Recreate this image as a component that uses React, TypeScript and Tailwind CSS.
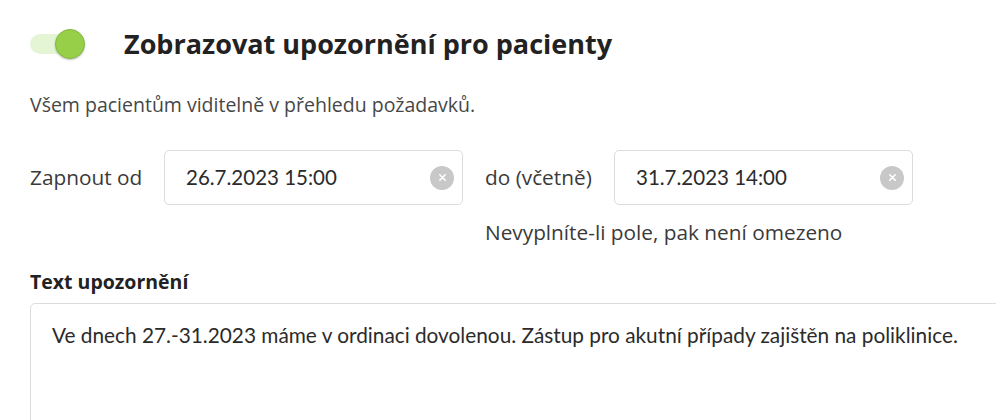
import React from 'react'

const lato = 'font-["Lato","Liberation_Sans",sans-serif]'
const openSans = 'font-["Open_Sans","Liberation_Sans",sans-serif]'

function Toggle() {
  return (
    <div className="relative w-[55px] h-[30px] shrink-0">
      <div className="absolute left-0 top-[5px] w-[52px] h-[20px] rounded-full bg-[#e4f5d6]" />
      <div className="absolute right-0 top-0 w-[30px] h-[30px] rounded-full bg-[#97d048] border border-[#7fbb3c] shadow-[0_1px_2px_rgba(0,0,0,0.25)]" />
    </div>
  )
}

function DateInput({ value }: { value: string }) {
  return (
    <div className="flex items-center justify-between w-[299px] h-[55px] shrink-0 rounded-[5px] border border-[#dcdcdc] bg-white pl-[21px] pr-[8px]">
      <span className={`${lato} text-[20.5px] text-[#2b2b2b]`}>{value}</span>
      <span className="flex items-center justify-center w-[24px] h-[24px] rounded-full bg-[#c8c8c8]">
        <svg width="9" height="9" viewBox="0 0 10 10" fill="none" stroke="white" strokeWidth="1.8" strokeLinecap="round">
          <path d="M2 2l6 6M8 2l-6 6" />
        </svg>
      </span>
    </div>
  )
}

export default function App() {
  return (
    <div className="w-[996px] h-[420px] overflow-hidden bg-white pl-[30px] pt-[28px]">
      <div className="flex items-center h-[32px]">
        <Toggle />
        <h1 className={`${openSans} ml-[39px] text-[27px] leading-[32px] font-bold text-[#222]`}>
          Zobrazovat upozornění pro pacienty
        </h1>
      </div>

      <p className={`${openSans} mt-[33px] text-[19.5px] leading-[24px] text-[#474747]`}>
        Všem pacientům viditelně v přehledu požadavků.
      </p>

      <div className="flex items-start mt-[33px]">
        <div className="flex items-center">
          <span className={`${openSans} w-[134px] text-[20.8px] text-[#3a3a3a]`}>Zapnout od</span>
          <DateInput value="26.7.2023 15:00" />
        </div>
        <div className="ml-[22px] flex flex-col">
          <div className="flex items-center">
            <span className={`${openSans} w-[129px] text-[20.8px] text-[#3a3a3a]`}>do (včetně)</span>
            <DateInput value="31.7.2023 14:00" />
          </div>
          <span className={`${openSans} mt-[14px] text-[20.8px] leading-[26px] text-[#3a3a3a]`}>
            Nevyplníte-li pole, pak není omezeno
          </span>
        </div>
      </div>

      <div className={`${openSans} mt-[25px] text-[19.5px] leading-[24px] font-bold text-[#222]`}>
        Text upozornění
      </div>

      <div className="mt-[9px] w-[1000px] h-[150px] rounded-tl-[5px] border border-[#dcdcdc] pl-[21px] pt-[17px]">
        <p className={`${lato} text-[20.8px] leading-[28px] text-[#2b2b2b]`}>
          Ve dnech 27.-31.2023 máme v ordinaci dovolenou. Zástup pro akutní případy zajištěn na poliklinice.
        </p>
      </div>
    </div>
  )
}
